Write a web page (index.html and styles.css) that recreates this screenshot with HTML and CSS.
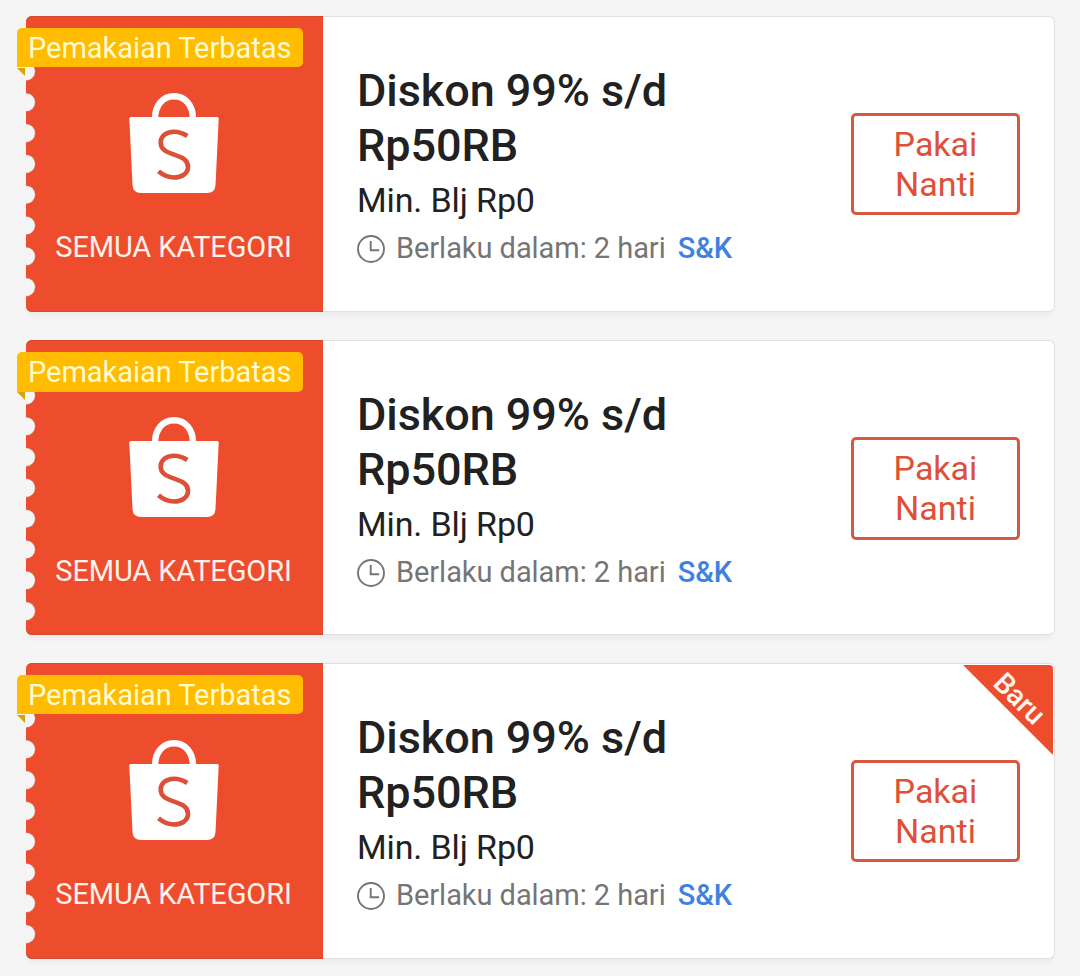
FILE: index.html
```
<!DOCTYPE html>
<html lang="id">
<head>
<meta charset="utf-8">
<title>Voucher</title>
<link rel="stylesheet" href="styles.css">
</head>
<body>
<svg width="0" height="0" class="defs" aria-hidden="true">
  <symbol id="bag" viewBox="0 0 90 100">
    <path d="M26 26C26 12 34 3.200 45 3.200s19 8.800 19 22.800" fill="none" stroke="#fff" stroke-width="6.400"/>
    <path d="M1.500 24h87q1.200 0 1.200 1.500L86.500 92q-.5 8-8.500 8H12q-8 0-8.500-8L.3 25.500Q.3 24 1.500 24z" fill="#fff"/>
    <path d="M58.300 43C54 40.200 50 38.800 45 38.800c-8 0-13.300 4.500-13.300 10.700 0 6.800 5.300 9.200 12.800 11.900C53.500 64.500 59 66.500 59 73.700 59 80.300 53 84.500 45 84.500c-6 0-11-2.300-15.500-6.200" fill="none" stroke="#dc5038" stroke-width="4.600"/>
  </symbol>
  <symbol id="clock" viewBox="0 0 28 28">
    <circle cx="14" cy="14" r="13" fill="none" stroke="#757575" stroke-width="1.900"/>
    <path d="M13.700 6v9.200h8.500" fill="none" stroke="#757575" stroke-width="1.900"/>
  </symbol>
  <symbol id="notches" viewBox="0 0 10 240">
    <g fill="#f5f5f5" stroke="#c4533b" stroke-opacity=".45" stroke-width="1">
      <circle cy="11.500" r="9.300"/><circle cy="42.300" r="9.300"/><circle cy="73.100" r="9.300"/><circle cy="103.900" r="9.300"/>
      <circle cy="134.700" r="9.300"/><circle cy="165.500" r="9.300"/><circle cy="196.300" r="9.300"/><circle cy="227.100" r="9.300"/>
    </g>
  </symbol>
</svg>
<main class="list">
  <article class="card">
    <div class="brand">
      <svg class="notches"><use href="#notches"/></svg>
      <svg class="bag"><use href="#bag"/></svg>
      <span class="category">SEMUA KATEGORI</span>
    </div>
    <div class="info">
      <h2 class="title">Diskon 99% s/d<br>Rp50RB</h2>
      <p class="minimum">Min. Blj Rp0</p>
      <p class="validity"><svg class="clock"><use href="#clock"/></svg><span class="expires">Berlaku dalam: 2 hari</span><a class="terms">S&amp;K</a></p>
    </div>
    <button class="use">Pakai<br>Nanti</button>
    <span class="tag">Pemakaian Terbatas</span>
  </article>
  <article class="card card-short">
    <div class="brand">
      <svg class="notches"><use href="#notches"/></svg>
      <svg class="bag"><use href="#bag"/></svg>
      <span class="category">SEMUA KATEGORI</span>
    </div>
    <div class="info">
      <h2 class="title">Diskon 99% s/d<br>Rp50RB</h2>
      <p class="minimum">Min. Blj Rp0</p>
      <p class="validity"><svg class="clock"><use href="#clock"/></svg><span class="expires">Berlaku dalam: 2 hari</span><a class="terms">S&amp;K</a></p>
    </div>
    <button class="use">Pakai<br>Nanti</button>
    <span class="tag">Pemakaian Terbatas</span>
  </article>
  <article class="card">
    <div class="brand">
      <svg class="notches"><use href="#notches"/></svg>
      <svg class="bag"><use href="#bag"/></svg>
      <span class="category">SEMUA KATEGORI</span>
    </div>
    <div class="info">
      <h2 class="title">Diskon 99% s/d<br>Rp50RB</h2>
      <p class="minimum">Min. Blj Rp0</p>
      <p class="validity"><svg class="clock"><use href="#clock"/></svg><span class="expires">Berlaku dalam: 2 hari</span><a class="terms">S&amp;K</a></p>
    </div>
    <button class="use">Pakai<br>Nanti</button>
    <span class="tag">Pemakaian Terbatas</span>
    <div class="ribbon"><span class="ribbon-text">Baru</span></div>
  </article>
</main>
</body>
</html>
```
FILE: styles.css
```
* { box-sizing: border-box; }
body {
  margin: 0;
  height: 976px;
  overflow: hidden;
  background: #f5f5f5;
  font-family: Roboto, "Liberation Sans", sans-serif;
}
.defs { position: absolute; }
.list {
  display: flex;
  flex-direction: column;
  gap: 28px;
  padding: 16px 25px 0 26px;
}
.card {
  position: relative;
  display: flex;
  height: 296px;
  background: #fff;
  border-radius: 6px;
  box-shadow: inset 0 0 0 1px #dfdfdf, 0 6px 7px -3px rgba(0, 0, 0, .05);
}
.card-short { height: 295px; }
.brand {
  position: relative;
  flex: none;
  width: 297px;
  display: flex;
  flex-direction: column;
  align-items: center;
  padding: 77px 2px 0 0;
  background: #ee4d2d;
  border-radius: 6px 0 0 6px;
  box-shadow: inset 0 1px 0 #d64a2e, inset 0 -1px 0 #cf4a30;
}
.notches {
  position: absolute;
  left: 0;
  top: 44px;
  width: 10px;
  height: 240px;
}
.bag { width: 90px; height: 100px; }
.category {
  margin-top: 37px;
  color: #fff2ec;
  font-size: 29px;
  letter-spacing: -.13px;
  line-height: 34px;
  white-space: nowrap;
}
.info { flex: 1; padding: 47px 0 0 34px; }
.title {
  margin: 0;
  color: #212121;
  font-size: 45px;
  letter-spacing: -.06px;
  line-height: 55px;
  font-weight: 500;
}
.minimum {
  margin: 7px 0 0;
  color: #212121;
  font-size: 34px;
  letter-spacing: -.12px;
  line-height: 40px;
}
.validity {
  display: flex;
  align-items: center;
  margin: 11px 0 0;
  font-size: 29px;
  letter-spacing: -.05px;
  line-height: 34px;
  color: #757575;
  white-space: nowrap;
}
.clock { width: 28px; height: 28px; margin: 2px 11px 0 0; }
.terms { margin-left: 12px; color: #4080e0; font-weight: 500; }
.use {
  width: 169px;
  height: 102px;
  margin: 97px 35px 0 0;
  padding: 0;
  background: #fff;
  border: 3px solid #d5583f;
  border-radius: 5px;
  color: #dc5137;
  font: 34px/40px Roboto, "Liberation Sans", sans-serif;
}
.card-short .use { height: 103px; padding-bottom: 1px; }
.tag {
  position: absolute;
  left: -9px;
  top: 12px;
  width: 286px;
  height: 39px;
  padding-left: 11px;
  background: #ffbc00;
  border-radius: 5px 5px 5px 0;
  color: #fffbd0;
  font-size: 29px;
  letter-spacing: -.04px;
  line-height: 40px;
  white-space: nowrap;
}
.card-short .tag { height: 40px; }
.tag::after {
  content: "";
  position: absolute;
  left: 0;
  top: 40px;
  width: 8px;
  height: 8px;
  background: #d9a30a;
  clip-path: polygon(0 0, 100% 0, 100% 100%);
}
.ribbon {
  position: absolute;
  right: 2px;
  top: 2px;
  width: 90px;
  height: 90px;
  background: #ee4d2d;
  border-radius: 0 4px 0 0;
  clip-path: polygon(0 0, 100% 0, 100% 100%);
}
.ribbon-text {
  position: absolute;
  left: 16px;
  top: 17px;
  width: 80px;
  text-align: center;
  color: #fff5ee;
  font-size: 28.500px;
  line-height: 34px;
  font-weight: 500;
  transform: rotate(45deg);
}
```
